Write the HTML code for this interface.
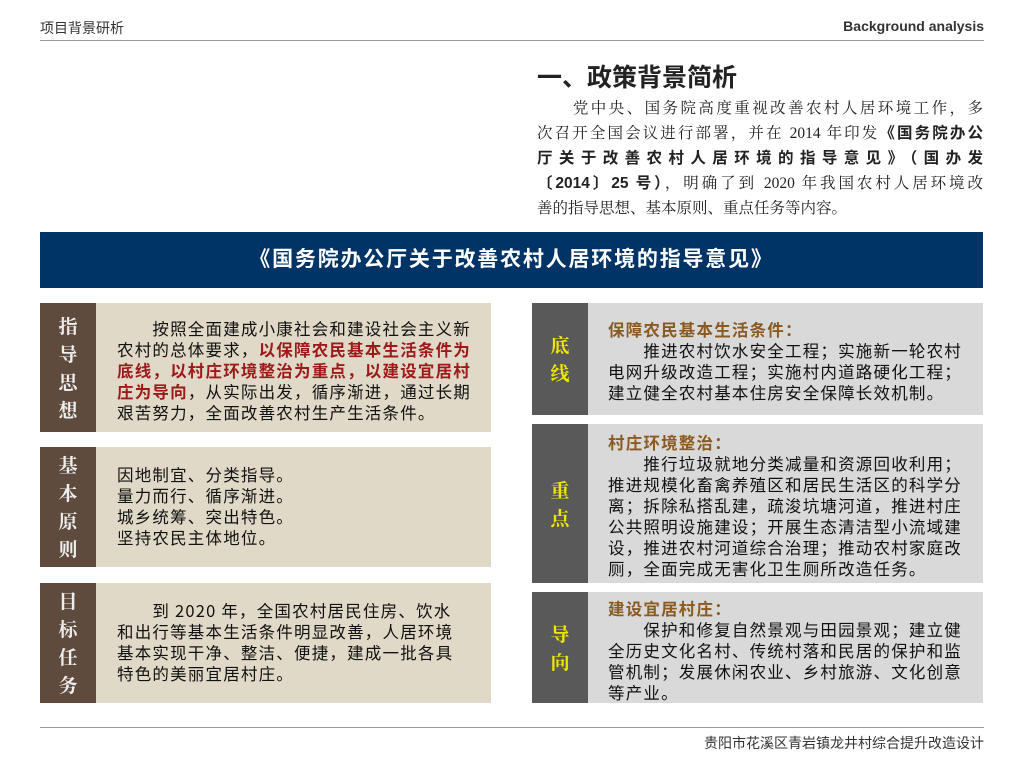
<!DOCTYPE html>
<html><head><meta charset="utf-8"><style>
*{margin:0;padding:0;box-sizing:border-box}
body{width:1024px;height:768px;background:#fff;position:relative;overflow:hidden;font-family:"Liberation Serif","Noto Serif CJK SC","Noto Sans CJK SC",serif;color:#111}
.abs{position:absolute}
.sans{font-family:"Liberation Sans","Noto Sans CJK SC",sans-serif}
.hd{top:18px;font-size:14px;color:#333}
.line{left:40px;width:944px;height:1px;background:#999}
.p{left:537px;width:446px;font-size:15.5px;line-height:25px;color:#222}
.p div{text-align:justify;text-align-last:justify;white-space:nowrap;height:25px}
.p b{font-family:"Liberation Sans","Noto Sans CJK SC",sans-serif}
.box{position:absolute}
.lab{position:absolute;left:0;top:0;bottom:0;width:56px;display:flex;flex-direction:column;justify-content:center;align-items:center;font-family:"Noto Serif CJK SC",serif;font-weight:bold;font-size:19px;line-height:28px;color:#eee}
.txt{position:absolute;font-family:"Noto Sans CJK SC",sans-serif;font-size:16.5px;letter-spacing:1.2px;line-height:21px;color:#111;white-space:nowrap}
.L{left:40px;width:451px;background:#e1d9c8}
.L .lab{background:#5f4b3d}
.R{left:532px;width:451px;background:#d9d9d9}
.R .lab{background:#595959;color:#f0e800}
.red{color:#9c1a1a;font-weight:bold}
.h{color:#8a5a20;font-weight:bold}
</style></head><body>
<div class="abs hd sans" style="left:40px">项目背景研析</div>
<div class="abs hd sans" style="right:40px;font-weight:bold">Background analysis</div>
<div class="abs line" style="top:40px"></div>
<div class="abs sans" style="left:537px;top:58px;font-size:25px;font-weight:bold;color:#222">一、政策背景简析</div>
<div class="abs p" style="top:96px">
<div>　　党中央、国务院高度重视改善农村人居环境工作，多</div>
<div>次召开全国会议进行部署，并在 2014 年印发<b>《国务院办公</b></div>
<div><b>厅关于改善农村人居环境的指导意见》（国办发</b></div>
<div><b>〔2014〕25 号）</b>，明确了到 2020 年我国农村人居环境改</div>
<div style="text-align-last:left">善的指导思想、基本原则、重点任务等内容。</div>
</div>
<div class="abs sans" style="left:40px;top:232px;width:943px;height:56px;background:#003466;color:#fff;font-size:21px;letter-spacing:1.8px;font-weight:bold;text-align:center;line-height:56px">《国务院办公厅关于改善农村人居环境的指导意见》</div>

<div class="box L" style="top:303px;height:129px"><div class="lab"><span>指</span><span>导</span><span>思</span><span>想</span></div>
<div class="txt" style="left:77px;top:15px">　　按照全面建成小康社会和建设社会主义新<br>农村的总体要求，<span class="red">以保障农民基本生活条件为</span><br><span class="red">底线，以村庄环境整治为重点，以建设宜居村</span><br><span class="red">庄为导向</span>，从实际出发，循序渐进，通过长期<br>艰苦努力，全面改善农村生产生活条件。</div></div>
<div class="box L" style="top:447px;height:120px"><div class="lab"><span>基</span><span>本</span><span>原</span><span>则</span></div>
<div class="txt" style="left:77px;top:17px">因地制宜、分类指导。<br>量力而行、循序渐进。<br>城乡统筹、突出特色。<br>坚持农民主体地位。</div></div>
<div class="box L" style="top:583px;height:120px"><div class="lab"><span>目</span><span>标</span><span>任</span><span>务</span></div>
<div class="txt" style="left:77px;top:17px">　　到 2020 年，全国农村居民住房、饮水<br>和出行等基本生活条件明显改善，人居环境<br>基本实现干净、整洁、便捷，建成一批各具<br>特色的美丽宜居村庄。</div></div>

<div class="box R" style="top:303px;height:112px"><div class="lab"><span>底</span><span>线</span></div>
<div class="txt" style="left:76px;top:16px"><span class="h">保障农民基本生活条件：</span><br>　　推进农村饮水安全工程；实施新一轮农村<br>电网升级改造工程；实施村内道路硬化工程；<br>建立健全农村基本住房安全保障长效机制。</div></div>
<div class="box R" style="top:424px;height:159px"><div class="lab"><span>重</span><span>点</span></div>
<div class="txt" style="left:76px;top:8px"><span class="h">村庄环境整治：</span><br>　　推行垃圾就地分类减量和资源回收利用；<br>推进规模化畜禽养殖区和居民生活区的科学分<br>离；拆除私搭乱建，疏浚坑塘河道，推进村庄<br>公共照明设施建设；开展生态清洁型小流域建<br>设，推进农村河道综合治理；推动农村家庭改<br>厕，全面完成无害化卫生厕所改造任务。</div></div>
<div class="box R" style="top:592px;height:111px"><div class="lab"><span>导</span><span>向</span></div>
<div class="txt" style="left:76px;top:6px"><span class="h">建设宜居村庄：</span><br>　　保护和修复自然景观与田园景观；建立健<br>全历史文化名村、传统村落和民居的保护和监<br>管机制；发展休闲农业、乡村旅游、文化创意<br>等产业。</div></div>

<div class="abs line" style="top:727px"></div>
<div class="abs sans" style="right:40px;top:733px;font-size:14px;color:#333">贵阳市花溪区青岩镇龙井村综合提升改造设计</div>
</body></html>
